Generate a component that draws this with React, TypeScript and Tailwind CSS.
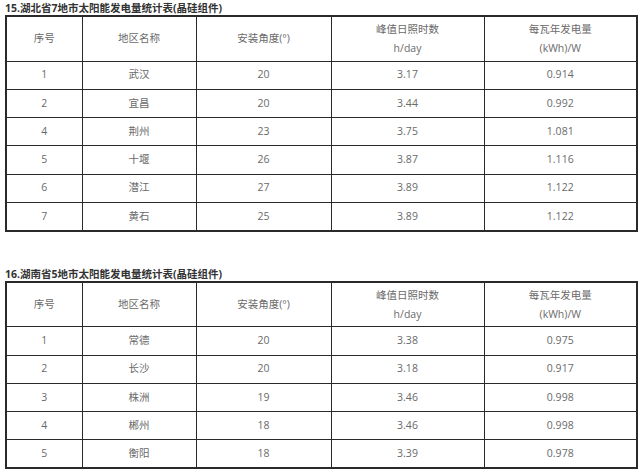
const font = { fontFamily: '"Open Sans", "Noto Sans CJK SC", sans-serif' };

interface Row {
  no: string;
  city: string;
  angle: string;
  hours: string;
  output: string;
}

const hubei: Row[] = [
  { no: '1', city: '武汉', angle: '20', hours: '3.17', output: '0.914' },
  { no: '2', city: '宜昌', angle: '20', hours: '3.44', output: '0.992' },
  { no: '4', city: '荆州', angle: '23', hours: '3.75', output: '1.081' },
  { no: '5', city: '十堰', angle: '26', hours: '3.87', output: '1.116' },
  { no: '6', city: '潜江', angle: '27', hours: '3.89', output: '1.122' },
  { no: '7', city: '黄石', angle: '25', hours: '3.89', output: '1.122' },
];

const hunan: Row[] = [
  { no: '1', city: '常德', angle: '20', hours: '3.38', output: '0.975' },
  { no: '2', city: '长沙', angle: '20', hours: '3.18', output: '0.917' },
  { no: '3', city: '株洲', angle: '19', hours: '3.46', output: '0.998' },
  { no: '4', city: '郴州', angle: '18', hours: '3.46', output: '0.998' },
  { no: '5', city: '衡阳', angle: '18', hours: '3.39', output: '0.978' },
];

function StatTable({ title, rows }: { title: string; rows: Row[] }) {
  const cell = 'border border-[#2a2a2a] text-center align-middle text-[10.5px] text-[#6a6a6a]';
  return (
    <div>
      <h3 className="text-[10.5px] font-bold text-[#333] leading-[14px] h-[15px] pl-[5px] pt-[1px]">{title}</h3>
      <table className="ml-[5px] border-collapse table-fixed w-[631px] border-2 border-[#2a2a2a]">
        <colgroup>
          <col className="w-[76px]" />
          <col className="w-[114px]" />
          <col className="w-[135px]" />
          <col className="w-[153px]" />
          <col className="w-[153px]" />
        </colgroup>
        <thead>
          <tr className="h-[45px]">
            <td className={cell}>序号</td>
            <td className={cell}>地区名称</td>
            <td className={cell}>安装角度(°)</td>
            <td className={`${cell} leading-[19px]`}>
              峰值日照时数
              <br />
              h/day
            </td>
            <td className={`${cell} leading-[19px]`}>
              每瓦年发电量
              <br />
              (kWh)/W
            </td>
          </tr>
        </thead>
        <tbody>
          {rows.map((r, i) => (
            <tr key={i} className="h-[28.3px]">
              <td className={cell}>{r.no}</td>
              <td className={cell}>{r.city}</td>
              <td className={cell}>{r.angle}</td>
              <td className={cell}>{r.hours}</td>
              <td className={cell}>{r.output}</td>
            </tr>
          ))}
        </tbody>
      </table>
    </div>
  );
}

export default function App() {
  return (
    <div className="w-[640px] h-[472px] bg-white overflow-hidden" style={font}>
      <StatTable title="15.湖北省7地市太阳能发电量统计表(晶硅组件)" rows={hubei} />
      <div className="mt-[34px]">
        <StatTable title="16.湖南省5地市太阳能发电量统计表(晶硅组件)" rows={hunan} />
      </div>
    </div>
  );
}
